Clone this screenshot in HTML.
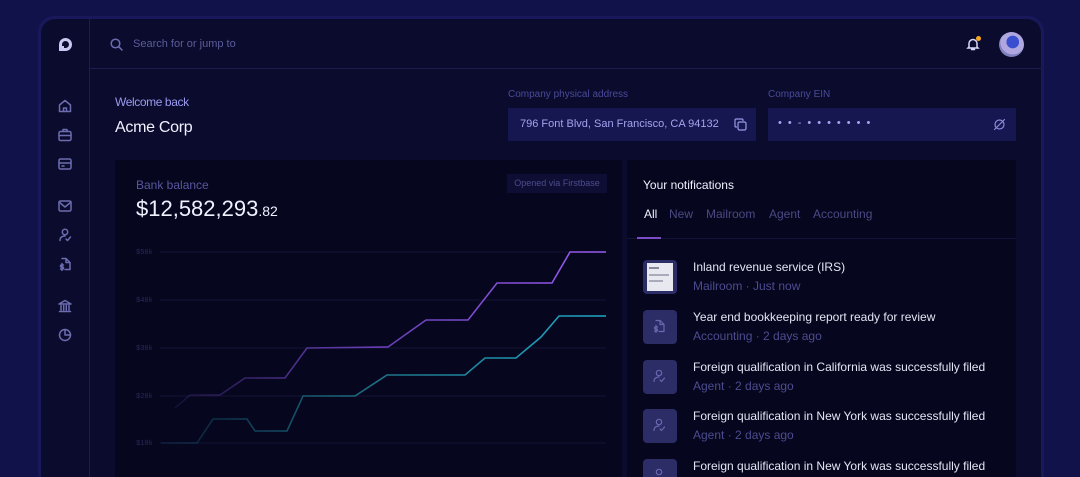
<!DOCTYPE html>
<html><head><style>
*{margin:0;padding:0;box-sizing:border-box}
html,body{width:1080px;height:477px;overflow:hidden}
body{background:#12124a;font-family:"Liberation Sans",sans-serif;position:relative}
.frame{position:absolute;left:38px;top:16px;width:1006px;height:461px;border-radius:16px 16px 0 0;background:#18185a;}
.app{position:absolute;left:41px;top:19px;width:1000px;height:458px;border-radius:14px 14px 0 0;background:#0b0b2d;overflow:hidden}
.side{position:absolute;left:0;top:0;width:49px;height:100%;border-right:1px solid #1c1c4e}
.hdr{position:absolute;left:49px;top:0;right:0;height:50px;border-bottom:1px solid #1c1c4e}
.t{position:absolute;white-space:nowrap}
svg.i{position:absolute;fill:none;stroke:#6c6cb0;stroke-width:1.5;stroke-linecap:round;stroke-linejoin:round}
.card{position:absolute;background:#06061e;overflow:hidden}
.ico{position:absolute;left:16px;width:34px;height:34px;border-radius:4px;background:#2c2c66}
</style></head><body>
<div class="frame"></div>
<div class="app">
 <div class="side">
  <svg style="position:absolute;left:17px;top:18px" width="15" height="15" viewBox="0 0 15 15"><path d="M1 14V7.5A6.5 6.5 0 1 1 7.5 14Z" fill="#c8c8f0"/><path d="M4 11V7.5A3.5 3.5 0 1 1 7.5 11Z" fill="#0b0b2d"/><rect x="1" y="9" width="5" height="5" fill="#c8c8f0"/></svg>
  <svg class="i" style="left:17px;top:80px" width="14" height="14" viewBox="0 0 14 14"><path d="M1.5 6L7 1.5 12.5 6V12.5H1.5Z M5.5 12.5V9h3v3.5"/></svg>
  <svg class="i" style="left:17px;top:109px" width="14" height="14" viewBox="0 0 14 14"><rect x="1" y="3.5" width="12" height="9" rx="1.5"/><path d="M5 3.5V1.5h4v2M1 7.5h12"/></svg>
  <svg class="i" style="left:17px;top:138px" width="14" height="14" viewBox="0 0 14 14"><rect x="1" y="2" width="12" height="10" rx="1.5"/><path d="M1 6h12M4 9h2"/></svg>
  <svg class="i" style="left:17px;top:180px" width="14" height="14" viewBox="0 0 14 14"><rect x="1" y="2" width="12" height="10" rx="1.5"/><path d="M1 3l6 5 6-5"/></svg>
  <svg class="i" style="left:17px;top:209px" width="14" height="14" viewBox="0 0 14 14"><circle cx="7" cy="4" r="2.7"/><path d="M2 12.5c0-3 2-4.5 5-4.5M8 11l1.5 1.5L12.5 9"/></svg>
  <svg class="i" style="left:17px;top:238px" width="14" height="14" viewBox="0 0 14 14"><path d="M4 1.5h4l4 4v7H7M8 1.5v4h4M4 6.5v7M5.5 8H3.5a1 1 0 0 0 0 2h1a1 1 0 0 1 0 2H2.5"/></svg>
  <svg class="i" style="left:17px;top:280px" width="14" height="14" viewBox="0 0 14 14"><path d="M1 5l6-3.5L13 5ZM1.5 12.5h11M3 6.5v4.5M5.7 6.5v4.5M8.3 6.5v4.5M11 6.5v4.5"/></svg>
  <svg class="i" style="left:17px;top:309px" width="14" height="14" viewBox="0 0 14 14"><circle cx="7" cy="7" r="5.5"/><path d="M7 1.5V7h5.5"/></svg>
 </div>
 <div class="hdr">
  <svg class="i" style="left:20px;top:19px" width="13" height="13" viewBox="0 0 13 13"><circle cx="5.5" cy="5.5" r="4.3"/><path d="M8.7 8.7L12 12"/></svg>
  <div class="t" style="left:43px;top:19px;font-size:11px;color:#5c5c9c">Search for or jump to</div>
  <svg style="position:absolute;left:876px;top:18px" width="14" height="14" viewBox="0 0 14 14" fill="none" stroke="#d8d8f8" stroke-width="1.5" stroke-linecap="round"><path d="M3 10V6.5a4 4 0 0 1 8 0V10l1 1H2Z M5.5 12.5h3"/></svg>
  <div style="position:absolute;left:886px;top:17px;width:5px;height:5px;border-radius:50%;background:#f5a623"></div>
  <div style="position:absolute;left:909px;top:13px;width:25px;height:25px;border-radius:50%;background:radial-gradient(circle at 55% 40%,#3a4ed0 0 30%,#b0a6e0 32% 60%,#8080c0 62%)"></div>
 </div>
 <div class="t" style="left:74px;top:76px;font-size:12px;color:#9a9af0;letter-spacing:-0.4px">Welcome back</div>
 <div class="t" style="left:74px;top:100px;font-size:16px;color:#f0f0ff;letter-spacing:-0.3px">Acme Corp</div>
 <div class="t" style="left:467px;top:70px;font-size:10px;color:#4a4a9a">Company physical address</div>
 <div style="position:absolute;left:467px;top:89px;width:248px;height:33px;background:#161650"></div>
 <div class="t" style="left:479px;top:99px;font-size:11px;color:#a4a4f0">796 Font Blvd, San Francisco, CA 94132</div>
 <svg class="i" style="left:693px;top:99px;stroke:#9a9ae8;stroke-width:1.2" width="13" height="13" viewBox="0 0 13 13"><rect x="4" y="4" width="8" height="8" rx="1.5"/><path d="M9 2.5V2a1 1 0 0 0-1-1H2a1 1 0 0 0-1 1v6a1 1 0 0 0 1 1h.5"/></svg>
 <div class="t" style="left:727px;top:70px;font-size:10px;color:#4a4a9a">Company EIN</div>
 <div style="position:absolute;left:727px;top:89px;width:248px;height:33px;background:#161650"></div>
 <div class="t" style="left:737px;top:98px;font-size:11px;color:#a4a4f0;letter-spacing:6px">••-•••••••</div>
 <svg class="i" style="left:952px;top:99px;stroke:#8a8ad8;stroke-width:1.2" width="13" height="13" viewBox="0 0 13 13"><circle cx="6.5" cy="6.5" r="4.5"/><path d="M1.5 11.5L11.5 1.5"/></svg>

 <div class="card" style="left:74px;top:141px;width:507px;height:317px">
  <div class="t" style="left:21px;top:18px;font-size:12px;color:#5858a0">Bank balance</div>
  <div class="t" style="left:21px;top:36px;font-size:22px;color:#f0f0ff">$12,582,293<span style="font-size:14px">.82</span></div>
  <div style="position:absolute;left:392px;top:14px;width:100px;height:19px;background:#0e0e34;color:#4c4c8c;font-size:9px;text-align:center;line-height:19px">Opened via Firstbase</div>
  <svg style="position:absolute;left:0;top:0" width="507" height="317" viewBox="115 160 507 317">
   <g stroke="#141436" stroke-width="1"><path d="M160 252H606M160 300H606M160 348H606M160 396H606M160 443H606"/></g>
   <g fill="#2a2a5a" font-family="Liberation Mono,monospace" font-size="7"><text x="136" y="254">$50k</text><text x="136" y="302">$40k</text><text x="136" y="350">$30k</text><text x="136" y="398">$20k</text><text x="136" y="445">$10k</text></g>
   <defs><linearGradient id="p" x1="160" x2="606" y1="0" y2="0" gradientUnits="userSpaceOnUse"><stop offset="0" stop-color="#8855e8" stop-opacity="0.05"/><stop offset="0.5" stop-color="#6a3fb8"/><stop offset="1" stop-color="#9a5cf0"/></linearGradient>
   <linearGradient id="c" x1="160" x2="606" y1="0" y2="0" gradientUnits="userSpaceOnUse"><stop offset="0" stop-color="#1a7a90" stop-opacity="0.15"/><stop offset="0.5" stop-color="#1e7488"/><stop offset="1" stop-color="#20a8c8"/></linearGradient></defs>
   <path d="M175 408L190 395H220L245 378H285L307 348L388 347L426 320H468L497 283H552L570 252H606" fill="none" stroke="url(#p)" stroke-width="1.6"/>
   <path d="M161 443H197L213 419H247L255 431H287L303 396H355L387 375H465L485 358H516L541 337L559 316H606" fill="none" stroke="url(#c)" stroke-width="1.6"/>
  </svg>
 </div>

 <div class="card" style="left:586px;top:141px;width:389px;height:317px">
  <div class="t" style="left:16px;top:18px;font-size:12px;color:#f0f0ff">Your notifications</div>
  <div class="t" style="left:17px;top:47px;font-size:12px;color:#f0f0ff">All</div>
  <div class="t" style="left:42px;top:47px;font-size:12px;color:#4a4a84">New</div>
  <div class="t" style="left:79px;top:47px;font-size:12px;color:#4a4a84">Mailroom</div>
  <div class="t" style="left:142px;top:47px;font-size:12px;color:#4a4a84">Agent</div>
  <div class="t" style="left:186px;top:47px;font-size:12px;color:#4a4a84">Accounting</div>
  <div style="position:absolute;left:0;top:78px;width:389px;height:1px;background:#14143a"></div>
  <div style="position:absolute;left:10px;top:77px;width:24px;height:2px;background:#7a4cc8"></div>
  <div class="ico" style="top:100px;background:#2c2c66"><div style="position:absolute;left:4px;top:3px;width:26px;height:28px;background:#e8e8f0"></div><div style="position:absolute;left:6px;top:7px;width:10px;height:2px;background:#889"></div><div style="position:absolute;left:6px;top:14px;width:20px;height:2px;background:#aab"></div><div style="position:absolute;left:6px;top:20px;width:14px;height:2px;background:#aab"></div></div>
  <div class="ico" style="top:150px"></div>
  <div class="ico" style="top:200px"></div>
  <div class="ico" style="top:249px"></div>
  <div class="ico" style="top:299px"></div>
  <svg class="i" style="left:25px;top:159px;stroke:#6868b0;stroke-width:1.2" width="14" height="14" viewBox="0 0 14 14"><path d="M4 1.5h4l4 4v7H7M8 1.5v4h4M4 6.5v7M5.5 8H3.5a1 1 0 0 0 0 2h1a1 1 0 0 1 0 2H2.5"/></svg>
  <svg class="i" style="left:25px;top:209px;stroke:#6868b0;stroke-width:1.2" width="14" height="14" viewBox="0 0 14 14"><circle cx="7" cy="4" r="2.7"/><path d="M2 12.5c0-3 2-4.5 5-4.5M8 11l1.5 1.5L12.5 9"/></svg>
  <svg class="i" style="left:25px;top:258px;stroke:#6868b0;stroke-width:1.2" width="14" height="14" viewBox="0 0 14 14"><circle cx="7" cy="4" r="2.7"/><path d="M2 12.5c0-3 2-4.5 5-4.5M8 11l1.5 1.5L12.5 9"/></svg>
  <svg class="i" style="left:25px;top:308px;stroke:#6868b0;stroke-width:1.2" width="14" height="14" viewBox="0 0 14 14"><circle cx="7" cy="4" r="2.7"/></svg>
  <div class="t" style="left:66px;top:100px;font-size:12px;color:#e4e4f4">Inland revenue service (IRS)</div>
  <div class="t" style="left:66px;top:119px;font-size:12px;color:#4c4c90">Mailroom · Just now</div>
  <div class="t" style="left:66px;top:150px;font-size:12px;color:#e4e4f4">Year end bookkeeping report ready for review</div>
  <div class="t" style="left:66px;top:169px;font-size:12px;color:#4c4c90">Accounting · 2 days ago</div>
  <div class="t" style="left:66px;top:200px;font-size:12px;color:#e4e4f4">Foreign qualification in California was successfully filed</div>
  <div class="t" style="left:66px;top:219px;font-size:12px;color:#4c4c90">Agent · 2 days ago</div>
  <div class="t" style="left:66px;top:249px;font-size:12px;color:#e4e4f4">Foreign qualification in New York was successfully filed</div>
  <div class="t" style="left:66px;top:268px;font-size:12px;color:#4c4c90">Agent · 2 days ago</div>
  <div class="t" style="left:66px;top:299px;font-size:12px;color:#e4e4f4">Foreign qualification in New York was successfully filed</div>
 </div>
</div>
</body></html>
